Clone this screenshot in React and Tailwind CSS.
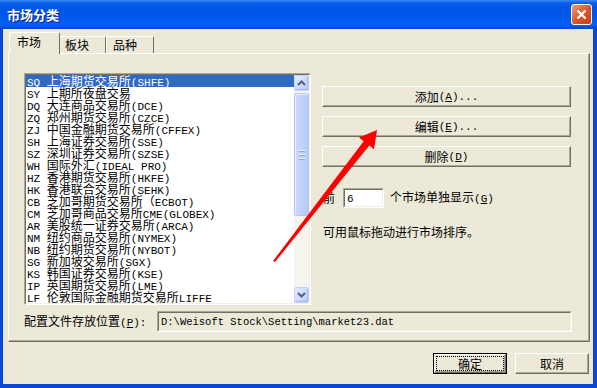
import React from 'react';
import clsx from 'clsx';

const markets = [
  'SQ 上海期货交易所(SHFE)',
  'SY 上期所夜盘交易',
  'DQ 大连商品交易所(DCE)',
  'ZQ 郑州期货交易所(CZCE)',
  'ZJ 中国金融期货交易所(CFFEX)',
  'SH 上海证券交易所(SSE)',
  'SZ 深圳证券交易所(SZSE)',
  'WH 国际外汇(IDEAL PRO)',
  'HZ 香港期货交易所(HKFE)',
  'HK 香港联合交易所(SEHK)',
  'CB 芝加哥期货交易所（ECBOT)',
  'CM 芝加哥商品交易所CME(GLOBEX)',
  'AR 美股统一证券交易所(ARCA)',
  'NM 纽约商品交易所(NYMEX)',
  'NB 纽约期货交易所(NYBOT)',
  'SG 新加坡交易所(SGX)',
  'KS 韩国证券交易所(KSE)',
  'IP 英国期货交易所(LME)',
  'LF 伦敦国际金融期货交易所LIFFE',
];

// latin runs get the mono face, the rest falls through to the CJK font
function Mixed({ text }) {
  return text
    .split(/([\x20-\x7e]+)/)
    .filter(Boolean)
    .map((part, i) =>
      /^[\x20-\x7e]+$/.test(part) ? (
        <span key={i} className="font-['Liberation_Mono',monospace] text-[11px] whitespace-pre">
          {part}
        </span>
      ) : (
        <span key={i}>{part}</span>
      )
    );
}

function Hot({ k, suffix = '' }) {
  return (
    <span className="font-['Liberation_Mono',monospace] text-[11px] whitespace-pre">
      (<span className="underline">{k}</span>){suffix}
    </span>
  );
}

function Btn({ children, className }) {
  return (
    <div
      className={clsx(
        'flex h-[21px] items-center justify-center border border-t-white border-l-white border-b-[#716F64] border-r-[#716F64] bg-[#ECE9D8] shadow-[inset_-1px_-1px_0_#ACA899]',
        className
      )}
    >
      {children}
    </div>
  );
}

function Sunken({ className, innerClassName, children }) {
  return (
    <div className={clsx('border border-t-[#ACA899] border-l-[#ACA899] border-b-white border-r-white', className)}>
      <div
        className={clsx(
          'h-full border border-t-[#716F64] border-l-[#716F64] border-b-[#F1EFE2] border-r-[#F1EFE2]',
          innerClassName
        )}
      >
        {children}
      </div>
    </div>
  );
}

function Chevron({ up }) {
  return (
    <svg width="9" height="6" viewBox="0 0 9 6">
      <path
        d={up ? 'M1 5 L4.5 1.5 L8 5' : 'M1 1 L4.5 4.5 L8 1'}
        fill="none"
        stroke="#4D6185"
        strokeWidth="2"
      />
    </svg>
  );
}

function ScrollButton({ up }) {
  return (
    <div className="flex h-[16px] items-center justify-center rounded-[2px] border border-[#C3D3FD] bg-[linear-gradient(135deg,#E6EEFE,#B9CCF8)] shadow-[inset_-1px_-1px_0_#A5BBEE]">
      <Chevron up={up} />
    </div>
  );
}

function Scrollbar() {
  return (
    <div className="flex w-[15px] flex-col bg-[#F5F4EE]">
      <ScrollButton up />
      <div className="mt-[2px] flex h-[123px] flex-col items-center justify-center rounded-[2px] border border-[#B3C7F6] bg-[linear-gradient(to_right,#CCDAFD,#BED0FB_60%,#B6CAF8)] shadow-[inset_1px_1px_0_#E9EFFE]">
        <div className="flex flex-col gap-px">
          <div className="h-px w-[6px] bg-[#EEF3FE] shadow-[0_1px_0_#8CA6DE]" />
          <div className="h-px w-[6px]" />
          <div className="h-px w-[6px] bg-[#EEF3FE] shadow-[0_1px_0_#8CA6DE]" />
          <div className="h-px w-[6px]" />
          <div className="h-px w-[6px] bg-[#EEF3FE] shadow-[0_1px_0_#8CA6DE]" />
        </div>
      </div>
      <div className="flex-1" />
      <ScrollButton />
    </div>
  );
}

export default function App() {
  return (
    <div className="relative flex h-[388px] w-[597px] flex-col overflow-hidden bg-[#0B46DB] font-['Noto_Sans_CJK_SC',sans-serif] text-[12px] leading-[14px] text-black">
      {/* title bar */}
      <div className="flex h-[29px] shrink-0 items-center justify-between bg-[linear-gradient(to_bottom,#3A8CF4_0px,#0A5DEB_3px,#0055E5_8px,#0058EC_18px,#0062F6_24px,#0052E2_27px,#0043CC_29px)] pl-[7px] pr-[5px]">
        <span className="text-[13px] font-bold leading-none text-white [text-shadow:1px_1px_0_#0A1F7A]">市场分类</span>
        <div className="flex h-[21px] w-[21px] items-center justify-center rounded-[3px] border border-white bg-[linear-gradient(135deg,#EE9A78,#D8532C_55%,#C53F17)]">
          <svg width="11" height="11" viewBox="0 0 11 11">
            <path d="M1.5 1.5 L9.5 9.5 M9.5 1.5 L1.5 9.5" stroke="#fff" strokeWidth="2.2" />
          </svg>
        </div>
      </div>

      {/* client area */}
      <div className="mb-[4px] ml-[3px] mr-[4px] flex flex-1 flex-col bg-[#ECE9D8]">
        {/* tabs */}
        <div className="mt-[3px] flex h-[21px] items-end pl-[6px]">
          <div className="relative z-10 -mb-px h-[22px] w-[51px] rounded-t-[2px] border-l border-r border-t border-l-white border-r-[#716F64] border-t-white bg-[#ECE9D8] pl-[7px] pt-[2px]">
            市场
          </div>
          <div className="h-[17px] w-[46px] rounded-t-[2px] border-r border-t border-r-[#716F64] border-t-white pl-[5px] pt-px">
            板块
          </div>
          <div className="h-[17px] w-[48px] rounded-t-[2px] border-l border-r border-t border-l-white border-r-[#716F64] border-t-white pl-[6px] pt-px">
            品种
          </div>
        </div>

        {/* tab panel */}
        <div className="ml-[5px] flex h-[289px] w-[582px] flex-col border border-b-[#716F64] border-l-white border-r-[#716F64] border-t-white pl-[15px] pt-[19px] shadow-[inset_-1px_-1px_0_#ACA899]">
          <div className="flex">
            <Sunken className="h-[232px] w-[287px]" innerClassName="flex bg-white">
              <div className="flex flex-1 flex-col">
                {markets.map((m, i) => (
                  <div
                    key={m}
                    className={clsx(
                      'h-[12px] whitespace-nowrap pl-px leading-[12px]',
                      i === 0 && 'bg-[#316AC5] text-white'
                    )}
                  >
                    <Mixed text={m} />
                  </div>
                ))}
              </div>
              <Scrollbar />
            </Sunken>

            <div className="ml-[11px] flex w-[249px] flex-col pt-[13px]">
              <div className="flex flex-col gap-[9px]">
                <Btn>
                  添加<Hot k="A" suffix="..." />
                </Btn>
                <Btn>
                  编辑<Hot k="E" suffix="..." />
                </Btn>
                <Btn>
                  删除<Hot k="D" />
                </Btn>
              </div>

              <div className="mt-[21px] flex h-[20px] items-center pl-px">
                <span>前</span>
                <Sunken className="ml-[8px] h-[20px] w-[41px]" innerClassName="bg-white pl-[2px]">
                  <span className="font-['Liberation_Mono',monospace] text-[11px] leading-[16px]">6</span>
                </Sunken>
                <span className="ml-[6px]">
                  个市场单独显示<Hot k="G" />
                </span>
              </div>

              <div className="mt-[17px] pl-px">可用鼠标拖动进行市场排序。</div>
            </div>
          </div>

          <div className="mt-[6px] flex h-[21px] items-center">
            <span className="w-[133px]">
              配置文件存放位置<Hot k="P" suffix=":" />
            </span>
            <Sunken className="h-[21px] w-[415px]" innerClassName="flex items-center bg-[#ECE9D8] pl-[2px]">
              <span className="font-['Liberation_Mono',monospace] text-[10.5px] whitespace-pre">
                D:\Weisoft Stock\Setting\market23.dat
              </span>
            </Sunken>
          </div>
        </div>

        {/* dialog buttons */}
        <div className="mt-[11px] flex justify-end gap-[8px] pr-[4px]">
          <div className="h-[21px] w-[74px] border border-black">
            <div className="h-full border border-b-[#716F64] border-l-white border-r-[#716F64] border-t-white p-[1px] shadow-[inset_-1px_-1px_0_#ACA899]">
              <div className="flex h-full items-center justify-center border border-dotted border-black">确定</div>
            </div>
          </div>
          <Btn className="w-[74px]">取消</Btn>
        </div>
      </div>

      {/* red annotation arrow */}
      <svg className="pointer-events-none absolute inset-0" width="597" height="388" viewBox="0 0 597 388">
        <polygon
          points="273,261 275,262 369.3,145.6 374,149.3 377,130 359,137.5 363.7,141.2"
          fill="#FF0000"
        />
      </svg>
    </div>
  );
}
